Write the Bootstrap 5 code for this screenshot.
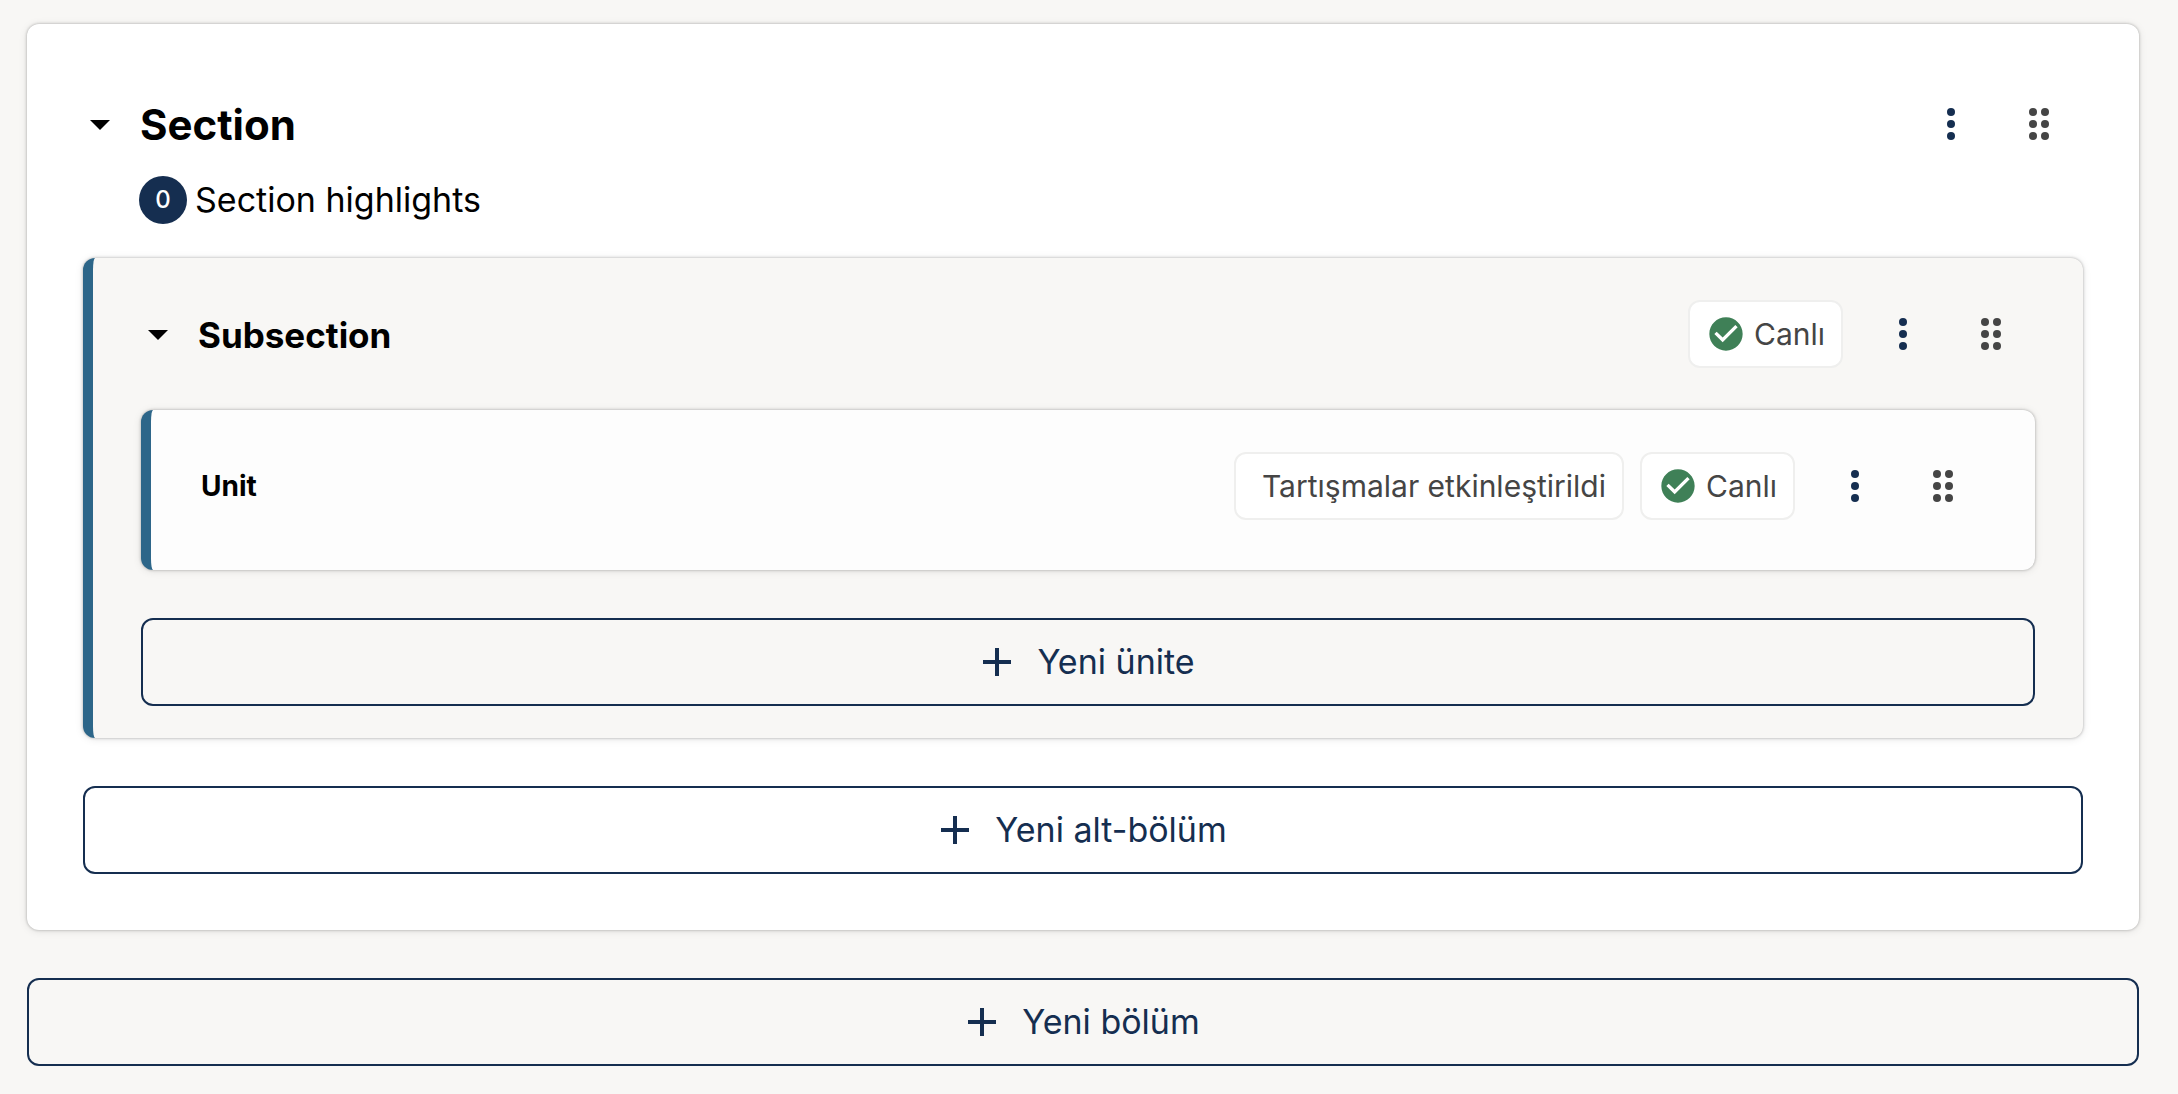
<!DOCTYPE html>
<html lang="tr">
<head>
<meta charset="utf-8">
<meta name="viewport" content="width=device-width, initial-scale=1">
<title>Section</title>
<link href="https://cdn.jsdelivr.net/npm/bootstrap@5.3.0/dist/css/bootstrap.min.css" rel="stylesheet">
<style>
:root { --navy:#152e50; --accent:#2d6689; --paper:#f8f7f5; --ink:#454545; }
body { background:var(--paper); color:#000; font-family:Inter,"Liberation Sans",sans-serif; font-size:34px; line-height:48px; padding:24px 39px 28px 27px; }
.outline-card { border-radius:12px; box-shadow:0 0 3px rgba(0,0,0,.3), 0 1px 8px rgba(0,0,0,.1); }
.section-card { background:#fff; padding:56px; }
.subsection-card { background:var(--paper); border-left:10px solid var(--accent); padding:32px 48px; margin-top:34px; }
.unit-card { background:#fdfdfd; border-left:10px solid var(--accent); padding:32px 48px 40px 50px; margin-top:32px; }
.outline-head { height:88px; }
.toggle-btn { border:0; background:none; padding:0; color:#000; display:flex; align-items:center; gap:16px; font-weight:700; margin-left:-7px; }
.toggle-btn svg { width:48px; height:48px; }
.outline-title { padding-top:2px; }
.title-lg { font-size:42px; }
.title-md { font-size:35px; }
.title-sm { font-size:28px; font-weight:700; }
.icon-btn { border:0; background:none; padding:0; width:88px; height:88px; display:flex; align-items:center; justify-content:center; color:var(--navy); }
.icon-btn.drag-btn { color:var(--ink); }
.icon-btn svg { width:48px; height:48px; }
.highlight-row { border:0; background:none; padding:0 0 0 56px; margin-top:8px; color:#000; }
.count-dot { width:48px; height:48px; border-radius:50%; background:var(--navy); color:#fff; font-size:24px; font-weight:500; }
.status-pill { height:68px; border:2px solid #efefee; border-radius:12px; background:#fff; color:var(--ink); padding:0 16px; font-size:30px; gap:8px; }
.status-pill svg { width:40px; height:40px; }
.pill-text-only { padding-left:26px; }
.add-btn { width:100%; height:88px; margin-top:48px; border:2px solid var(--navy); border-radius:12px; background:none; color:var(--navy); display:flex; align-items:center; justify-content:center; gap:16px; padding:0 8px 0 0; }
.add-btn svg { width:48px; height:48px; }
.add-btn:hover { background:#e9eef4; }
</style>
</head>
<body>
<svg class="d-none" aria-hidden="true">
  <symbol id="i-caret" viewBox="0 0 24 24"><path fill="currentColor" d="M7 10l5 5 5-5z"/></symbol>
  <symbol id="i-plus" viewBox="0 0 24 24"><path fill="currentColor" d="M19 13h-6v6h-2v-6H5v-2h6V5h2v6h6z"/></symbol>
  <symbol id="i-more" viewBox="0 0 24 24"><g fill="currentColor"><circle cx="12" cy="6" r="2"/><circle cx="12" cy="12" r="2"/><circle cx="12" cy="18" r="2"/></g></symbol>
  <symbol id="i-drag" viewBox="0 0 24 24"><g fill="currentColor"><circle cx="9" cy="6" r="2"/><circle cx="9" cy="12" r="2"/><circle cx="9" cy="18" r="2"/><circle cx="15" cy="6" r="2"/><circle cx="15" cy="12" r="2"/><circle cx="15" cy="18" r="2"/></g></symbol>
  <symbol id="i-check" viewBox="0 0 24 24"><path fill="#3f8057" d="M12 2C6.48 2 2 6.48 2 12s4.48 10 10 10 10-4.480 10-10S17.520 2 12 2zm-2 15l-5-5 1.410-1.410L10 14.170l7.590-7.590L19 8z"/></symbol>
</svg>
<main>
  <section class="outline-card section-card">
    <header class="outline-head d-flex align-items-center justify-content-between">
      <h2 class="m-0"><button type="button" class="toggle-btn title-lg"><svg aria-hidden="true"><use href="#i-caret"/></svg><span class="outline-title">Section</span></button></h2>
      <div class="d-flex align-items-center">
        <button type="button" class="icon-btn" aria-label="Menu"><svg><use href="#i-more"/></svg></button>
        <button type="button" class="icon-btn drag-btn" aria-label="Drag"><svg><use href="#i-drag"/></svg></button>
      </div>
    </header>
    <button type="button" class="highlight-row d-flex align-items-center gap-2">
      <span class="count-dot d-flex align-items-center justify-content-center">0</span><span>Section highlights</span>
    </button>

    <section class="outline-card subsection-card">
      <header class="outline-head d-flex align-items-center justify-content-between">
        <h3 class="m-0"><button type="button" class="toggle-btn title-md"><svg aria-hidden="true"><use href="#i-caret"/></svg><span class="outline-title">Subsection</span></button></h3>
        <div class="d-flex align-items-center">
          <span class="status-pill d-flex align-items-center me-3"><svg aria-hidden="true"><use href="#i-check"/></svg>Canlı</span>
          <button type="button" class="icon-btn" aria-label="Menu"><svg><use href="#i-more"/></svg></button>
          <button type="button" class="icon-btn drag-btn" aria-label="Drag"><svg><use href="#i-drag"/></svg></button>
        </div>
      </header>

      <article class="outline-card unit-card">
        <header class="outline-head d-flex align-items-center justify-content-between">
          <h4 class="outline-title title-sm m-0">Unit</h4>
          <div class="d-flex align-items-center">
            <span class="status-pill pill-text-only d-flex align-items-center me-3">Tartışmalar etkinleştirildi</span>
            <span class="status-pill d-flex align-items-center me-3"><svg aria-hidden="true"><use href="#i-check"/></svg>Canlı</span>
            <button type="button" class="icon-btn" aria-label="Menu"><svg><use href="#i-more"/></svg></button>
            <button type="button" class="icon-btn drag-btn" aria-label="Drag"><svg><use href="#i-drag"/></svg></button>
          </div>
        </header>
      </article>
      <button type="button" class="add-btn"><svg aria-hidden="true"><use href="#i-plus"/></svg>Yeni ünite</button>
    </section>
    <button type="button" class="add-btn"><svg aria-hidden="true"><use href="#i-plus"/></svg>Yeni alt-bölüm</button>
  </section>
  <button type="button" class="add-btn"><svg aria-hidden="true"><use href="#i-plus"/></svg>Yeni bölüm</button>
</main>
<script src="https://cdn.jsdelivr.net/npm/bootstrap@5.3.0/dist/js/bootstrap.bundle.min.js"></script>
</body>
</html>
